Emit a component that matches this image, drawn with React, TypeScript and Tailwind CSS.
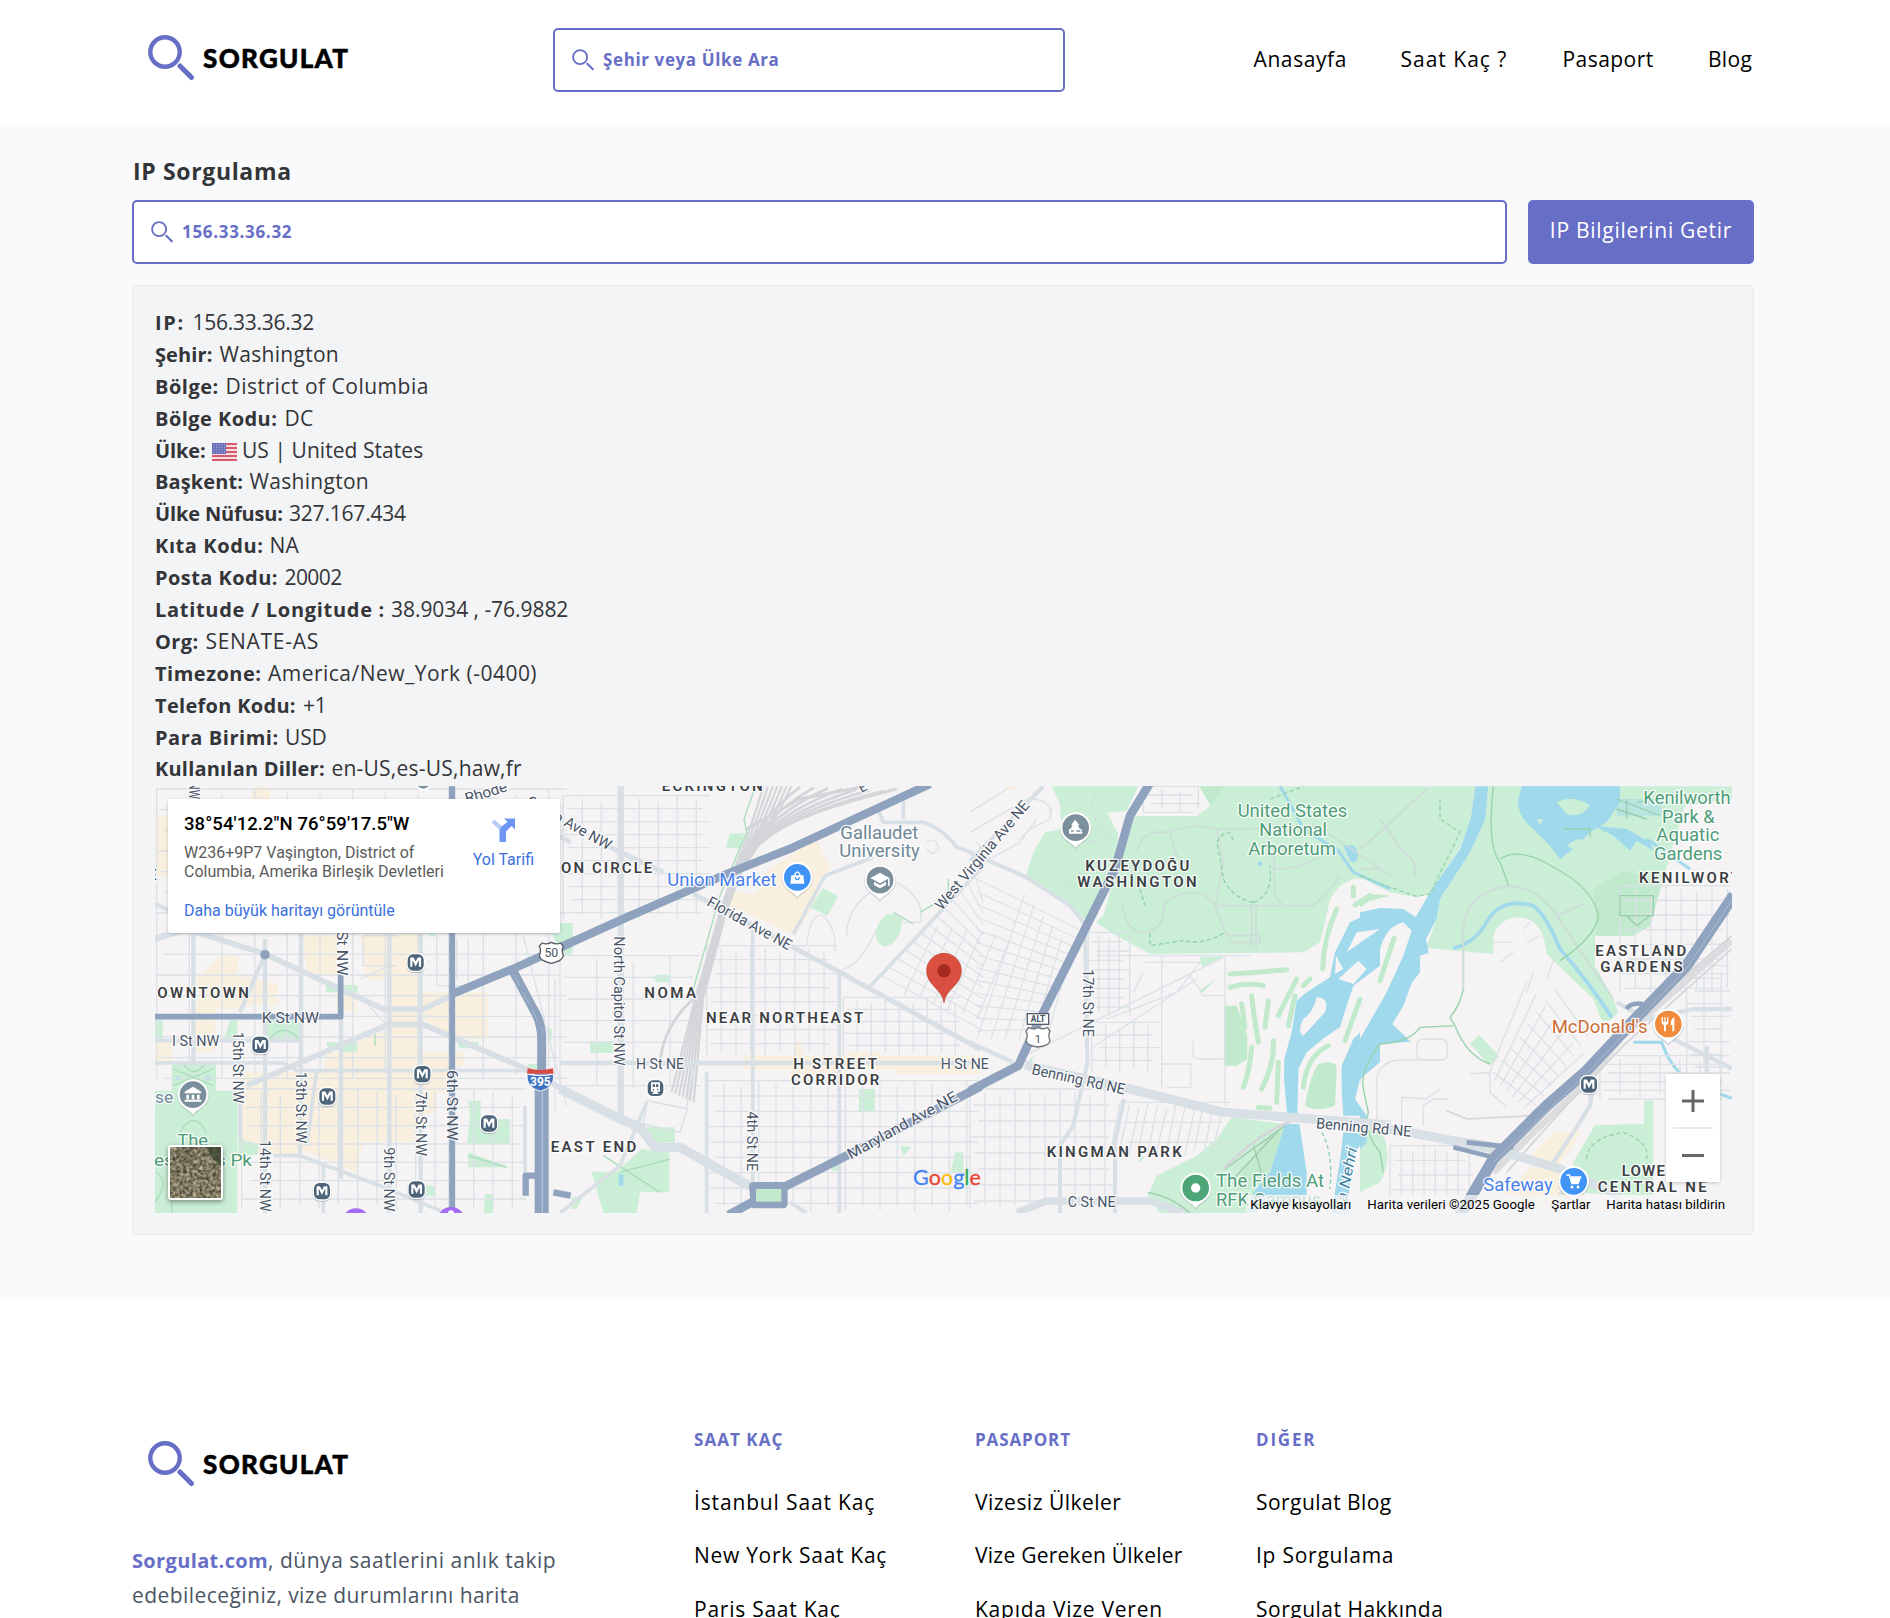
import type { ReactNode } from "react";

type Row = { label: string; value: string; lc: string; vc: string; flag?: boolean };

const rows: Row[] = [
  { label: "IP:", value: "156.33.36.32", lc: "w-[37.500px] tracking-[1.700px]", vc: "tracking-[-0.250px]" },
  { label: "Şehir:", value: "Washington", lc: "w-[64.500px] tracking-[0.1px]", vc: "tracking-[0.300px]" },
  { label: "Bölge:", value: "District of Columbia", lc: "w-[70.500px] tracking-[0.5px]", vc: "tracking-[0.500px]" },
  { label: "Bölge Kodu:", value: "DC", lc: "w-[129.500px] tracking-[0.45px]", vc: "tracking-[0.300px]" },
  { label: "Ülke:", value: "US | United States", lc: "w-[56.500px] tracking-[-0.1px]", vc: "tracking-[0.050px]", flag: true },
  { label: "Başkent:", value: "Washington", lc: "w-[94.500px] tracking-[0.1px]", vc: "tracking-[0.300px]" },
  { label: "Ülke Nüfusu:", value: "327.167.434", lc: "w-[134px] tracking-[-0.150px]", vc: "tracking-[-0.200px]" },
  { label: "Kıta Kodu:", value: "NA", lc: "w-[114.500px] tracking-[0.600px]", vc: "tracking-[0.2px]" },
  { label: "Posta Kodu:", value: "20002", lc: "w-[129.500px] tracking-[0.450px]", vc: "tracking-[-0.600px]" },
  { label: "Latitude / Longitude :", value: "38.9034 , -76.9882", lc: "w-[236px] tracking-[0.7px]", vc: "tracking-[-0.050px]" },
  { label: "Org:", value: "SENATE-AS", lc: "w-[50.500px] tracking-[0.4px]", vc: "tracking-[0.700px]" },
  { label: "Timezone:", value: "America/New_York (-0400)", lc: "w-[113px] tracking-[0.5px]", vc: "tracking-[0.480px]" },
  { label: "Telefon Kodu:", value: "+1", lc: "w-[148px] tracking-[0.3px]", vc: "tracking-[-0.2px]" },
  { label: "Para Birimi:", value: "USD", lc: "w-[130px] tracking-[0.550px]", vc: "tracking-[-0.100px]" },
  { label: "Kullanılan Diller:", value: "en-US,es-US,haw,fr", lc: "w-[176.500px] tracking-[0.2px]", vc: "tracking-[0.220px]" },
];

function SearchIcon({ className, w }: { className: string; w: number }) {
  return (
    <svg viewBox="0 0 46 46" className={className} fill="none" stroke="#676ec6">
      <circle cx="17" cy="17" r="14.7" strokeWidth={w} />
      <path d="M32 31 L43.500 42.500" strokeWidth={w * 1.15} strokeLinecap="round" />
    </svg>
  );
}

function Logo() {
  return (
    <div className="flex items-center pl-[16px]">
      <SearchIcon className="size-[46px]" w={4.4} />
      <span className="ml-[9px] -mt-[1px] font-['Lato'] text-[26px] leading-none font-black tracking-[1.3px] text-black [-webkit-text-stroke:0.5px]">SORGULAT</span>
    </div>
  );
}

function Flag() {
  return (
    <svg viewBox="0 0 25 18" className="mt-[8px] mr-[5.500px] h-[18px] w-[25px]">
      {Array.from({ length: 9 }, (_, i) => (
        <rect key={i} x="0" y={i * 2} width="25" height="2" fill={i % 2 ? "#f3dfe3" : "#d9596a"} />
      ))}
      <rect width="14" height="11" fill="#6a6fb8" />
      {Array.from({ length: 20 }, (_, i) => (
        <rect key={i} x={1.500 + (i % 5) * 2.600} y={1.200 + Math.floor(i / 5) * 2.500} width="1" height="1" fill="#b9bbe2" />
      ))}
    </svg>
  );
}

/* Map drawing: 3 units per CSS pixel. Sections are offset horizontally. */
const A = ({ children }: { children: ReactNode }) => <g transform="translate(-15 -21)">{children}</g>;
const B = ({ children }: { children: ReactNode }) => <g transform="translate(1215 -21)">{children}</g>;
const C = ({ children }: { children: ReactNode }) => <g transform="translate(2445 -21)">{children}</g>;
const D = ({ children }: { children: ReactNode }) => <g transform="translate(3615 -21)">{children}</g>;

type LabelProps = { x: number; y: number; w: number; r?: number; s?: number; c?: string; b?: boolean; i?: boolean; children: string };
function Label({ x, y, w, r = 0, s = 45, c = "#4a5568", b, i, children }: LabelProps) {
  return (
    <text
      transform={`translate(${x} ${y}) rotate(${r})`}
      fontSize={s}
      fontWeight={b ? 600 : 400}
      fontStyle={i ? "italic" : "normal"}
      fill={c}
      stroke="#ffffff"
      strokeOpacity="0.85"
      strokeWidth="8"
      strokeLinejoin="round"
      paintOrder="stroke"
      textLength={w}
      lengthAdjust={b ? "spacing" : "spacingAndGlyphs"}
    >
      {children}
    </text>
  );
}

function Metro({ x, y }: { x: number; y: number }) {
  return (
    <g transform={`translate(${x} ${y})`}>
      <rect x="-28" y="-27" width="56" height="58" rx="20" fill="#8d99a5" opacity="0.6" />
      <rect x="-28" y="-29" width="56" height="57" rx="20" fill="#fff" />
      <rect x="-24" y="-25" width="48" height="49" rx="16" fill="#4e6479" />
      <path d="M-13 12 V-12 H-8 L0 4 L8 -12 H13 V12" fill="none" stroke="#fff" strokeWidth="6.500" />
    </g>
  );
}

function Poi({ x, y, c, children }: { x: number; y: number; c: string; children?: ReactNode }) {
  return (
    <g transform={`translate(${x} ${y})`}>
      <path d="M0 65 C-12 47 -47 38 -47 3 A47 47 0 1 1 47 3 C47 38 12 47 0 65Z" fill="#9aa3ab" opacity="0.5" />
      <path d="M0 60 C-12 43 -46 35 -46 0 A46 46 0 1 1 46 0 C46 35 12 43 0 60Z" fill="#fff" />
      <circle r="40" fill={c} />
      <g fill="#fff">{children}</g>
    </g>
  );
}

function grid(x0: number, x1: number, y0: number, y1: number, sx: number, sy: number, skew = 0) {
  let d = "";
  let n = 0;
  for (let x = x0; x <= x1; x += sx, n++) d += `M${x} ${y0 + (n % 3) * 9}L${x + skew} ${y1 - (n % 2) * 14}`;
  n = 0;
  for (let y = y0; y <= y1; y += sy, n++) d += `M${x0 + (n % 3) * 12} ${y}L${x1 - (n % 2) * 22} ${y}`;
  return d;
}

function CityMap() {
  const dark = "#3c4043";
  return (
    <svg viewBox="0 0 4731 1281" className="block h-[427px] w-[1577px] bg-[#f5f3f4] font-['Roboto']">
      {/* commercial areas */}
      <g fill="#f8efdf">
        <A>
          <path d="M15 110H55V290H15ZM305 22H360V60H305ZM140 600L210 530L265 530L262 590L385 615V680H150ZM150 640H270V690H200L190 820H130V730ZM15 790H65V850H15ZM460 470H560V590H470ZM630 470H720V600H650ZM720 462H812V880H720ZM820 640H1015V780H900L820 720ZM270 880H520L530 820H620V790L720 750V1090H640L620 1180L450 1110L430 1130L270 1120ZM720 880H860V1000L800 1010V1090H720ZM820 820H940V860H900V940H820ZM560 640H620V700L560 690Z" />
        </A>
        <B>
          <path d="M620 275L770 180L812 270L790 290L755 390L705 470L500 375L512 340L590 345ZM550 830H700L705 788H725L730 830H860L870 820H960V830H1260V885H1010L1000 870H860L855 885H690V870H550Z" />
        </B>
        <C><path d="M0 830H28V860L0 885ZM105 22H150L110 35Z" /></C>
        <D><path d="M520 1120L585 1060H660L640 1100L590 1165L640 1200L700 1290H480L470 1245H430L520 1160Z" /></D>
      </g>

      {/* parks */}
      <g fill="#cbeed6">
        <A>
          <path d="M15 935H262V1302H15ZM65 855H198V935H65ZM15 722H38V780H15ZM222 780L240 722H262V780ZM350 722H448V780H350ZM528 618H622V640H528ZM530 790H622V818H575L530 800ZM955 965H992V1020H1080V1095H950L960 1020ZM955 1120L1078 1165H955ZM920 788H985V808H930ZM1195 435H1262V530L1230 520ZM1005 1245H1030V1302H1002ZM265 1080L330 1095L320 1128H265ZM838 462H855V472H838ZM790 1220H855V1250H800ZM1135 855H1165V870H1135ZM1195 750H1205V785H1195Z" />
        </A>
        <B>
          <path d="M510 163H553L540 210L497 205ZM0 432H38V522L0 515ZM790 328L835 352L802 410L750 385ZM1000 405L1028 420L1020 460Q1000 505 972 502Q942 490 948 455Q965 400 1000 405ZM90 787H160V822H90ZM280 598L290 587H328V610H290ZM897 930H945V998H897ZM95 1178H170L245 1110L328 1120V1240H240L230 1302H130ZM260 1045H345V1090H270ZM1185 1120H1210V1178H1172ZM1020 1100L1055 1105L1030 1130ZM35 1255L70 1250L50 1290H35ZM815 1160H835V1175H815Z" />
        </B>
        <C>
          <path d="M245 22H505L470 95L412 102L445 165L440 215L380 360L345 420L300 380L165 300L190 220L225 160L275 150L270 75ZM495 112H680L722 80L688 22H1262V300H1150L1110 320L1080 360L1060 450L1050 490L1000 520L540 525L430 465L378 430L400 410L445 250L475 125ZM690 535L765 532L695 565ZM785 1015L945 1035L900 1180L860 1302H570L533 1250L560 1190L680 1130L740 1080ZM175 845L190 830L185 850ZM505 1135L525 1130L510 1152Z" />
        </C>
        <D>
          <path d="M0 22H346L330 130L300 205L208 345L170 355L90 340L0 295ZM382 22H1115V60L975 80L955 150L935 210L905 320L870 440L820 470H705V560L760 660L775 700L750 725H725L700 660L560 525Q550 420 480 415Q420 415 400 470V525L198 507L230 420L240 360L330 220L375 120ZM330 795L358 768L418 832L390 860ZM0 1000L75 1080Q95 1150 60 1210L0 1240ZM640 1150L705 1038L852 1035V965H880V1247H780L640 1240Z" />
        </D>
      </g>
      <g fill="#c0eacb">
        <C>
          <path d="M688 22H765L722 80ZM762 680H800L832 770V840L800 860H762ZM690 635L740 598L695 642ZM1045 855Q1100 840 1100 870L1095 980Q1040 1000 1005 980Q1020 890 1045 855ZM860 1110L945 1035L900 1180L830 1230H790Z" />
          <g fill="none" stroke="#c0eacb" strokeWidth="15" strokeLinecap="round">
            <path d="M780 585Q860 580 950 572M780 625Q830 610 880 620M845 650Q850 700 865 790M815 675L825 745M895 665L885 745M980 600L925 710M975 650L955 740M910 785Q915 850 875 930M845 805Q840 870 820 925M925 850L920 970M1075 800Q1010 830 1000 925M1170 660L1125 785M1100 390Q1060 480 1058 570M1150 325V350M1155 378L1200 350M1000 620L1020 600M865 985L900 988" />
          </g>
        </C>
        <D><path d="M700 330L790 275L905 310L870 440L820 470H708V400ZM0 360Q30 340 90 350L30 365L0 385Z" /></D>
      </g>

      {/* water */}
      <g fill="#a0d8ec">
        <D>
          <path d="M346 22H384L376 120L330 220L240 360L230 420L198 480L206 522L180 530V580L155 612L130 680L97 735L152 788L60 795L15 860L0 910V690L60 600L60 520L0 590V400L60 387L130 390L167 415L210 340L300 210L332 120Z" />
          <path d="M485 22H780V70L740 130L690 160L640 210L600 240L570 200L520 150Q470 110 475 60Z" />
          <path d="M770 60H905V110H770Z" opacity="0.45" />
          <path d="M700 140L800 150L870 190L880 215L830 185L810 215L760 170Z" />
          <path d="M0 985L20 1010L20 1090L0 1110Z" />
        </D>
        <C>
          <path d="M1230 390L1140 430L1095 520L1080 595L1010 640L980 665L965 760L943 840L942 900L952 1010H982L985 870L1010 820L1065 775L1110 745L1130 680L1150 620L1230 560ZM1230 700L1150 780L1115 860V930L1120 1010L1190 1010L1155 960L1170 900L1230 850ZM945 1035H988L1010 1180V1250L830 1302L850 1240L900 1180ZM1120 1060L1190 1065L1150 1130L1130 1302H1085L1112 1130ZM1120 200Q1160 190 1165 225Q1160 260 1140 245Z" />
          <path d="M930 22L960 75L1000 150L1105 215L1150 280L1262 330" fill="none" stroke="#a0d8ec" strokeWidth="9" />
          <circle cx="870" cy="254" r="7" />
        </C>
        <D>
          <path d="M280 508Q350 490 385 420Q430 355 520 380Q560 410 600 510Q680 600 755 715" fill="none" stroke="#a0d8ec" strokeWidth="11" />
          <path d="M820 790H905Q930 860 965 885M1080 945L1115 958M860 180L990 270" fill="none" stroke="#a0d8ec" strokeWidth="9" />
        </D>
        <A><path d="M76 890h14v14h-14zM165 890h14v14h-14z" opacity="0.6" /></A>
        <B><path d="M176 1185H190V1220H176Z" /></B>
      </g>
      <g fill="#f5f3f4">
        <D><path d="M60 510Q80 440 130 430L155 455L130 530L80 640L0 780V690L60 600Z" /><path d="M590 70Q640 45 690 80Q660 120 620 105ZM620 200L650 180L700 190L680 230ZM530 120H550L540 138Z" fill="#cbeed6" /></D>
        <C><path d="M1040 655Q1080 655 1065 700L1000 770Q980 760 1000 720Q1030 700 1040 655ZM1098 530L1120 570L1095 585ZM1165 545L1190 570L1150 615L1105 600ZM1230 450L1130 520L1160 460Z" /></C>
        <D><path d="M102 478L60 605" stroke="#c0eacb" strokeWidth="15" strokeLinecap="round" /></D>
      </g>

      {/* minor streets */}
      <g fill="none" stroke="#dbe2e7" strokeWidth="4">
        <A>
          <path d={grid(20, 1250, 30, 900, 98, 62)} />
          <path d={grid(275, 1130, 930, 1290, 58, 55)} />
          <path d="M740 470H640V560H740M860 470V620H1000M920 480V600M955 480V610M1120 470L1215 850L1250 980M1215 600V1000M1000 660V860M630 600L720 560M640 660L710 740M15 480L100 462" />
        </A>
        <B>
          <path d={grid(10, 450, 50, 420, 57, 39)} />
          <path d={grid(0, 420, 530, 930, 110, 65)} />
          <path d={grid(440, 830, 500, 830, 44, 42)} />
          <path d={grid(850, 1200, 655, 830, 42, 36)} />
          <path d={grid(440, 1255, 905, 1295, 52, 46)} />
          <path d="M740 500Q750 400 790 410Q830 450 825 520M850 570Q900 560 950 450M860 470Q860 390 930 340M1010 310Q1100 360 1080 430L1030 430M1100 190Q1130 170 1135 210Q1120 235 1100 210" />
          {Array.from({ length: 13 }, (_, i) => (
            <path key={i} strokeWidth="3.500" d={`M${965 + i * 23} ${590 - i * 26}L${1270} ${755 - i * 32}${i % 2 ? `M${1010 + i * 22} ${640 + i * 7}L${1110 + i * 22} ${440 + i * 3}` : ""}`} />
          ))}
        </B>
        <C>
          {Array.from({ length: 13 }, (_, i) => (
            <path key={i} strokeWidth="3.500" d={`M${20} ${300 + i * 38}L${325 - i * 10} ${450 + i * 25}${i % 2 ? `M${i * 21} ${780}L${150 + i * 14} ${330 + i * 16}` : ""}`} />
          ))}
          <path d={grid(355, 480, 460, 710, 31, 28)} />
          <path d={grid(365, 570, 730, 880, 42, 38)} />
          <path d={grid(0, 440, 930, 1290, 45, 48)} />
          <path d={grid(450, 780, 970, 1130, 28, 60, -30)} />
          <path d="M380 530H840M575 530V930M765 535V980M165 830L760 535M360 810L680 600M520 580L490 640M525 550H690L620 640L410 720M660 590L700 650H765M670 785V830Q670 840 690 840H760M575 855H662V925H590M0 100L110 30M0 160L190 50M20 190L60 240L150 190L200 120M245 85L240 120" />
          <path d={grid(520, 690, 22, 100, 55, 26)} />
          <path d="M180 60Q250 60 240 120L180 150L150 180" />
          <path d="M250 200Q320 220 330 300M200 230Q260 300 330 340M380 30Q340 120 430 180M290 170Q330 200 400 180" stroke="#cfe3dc" />
          <path d="M500 215Q520 150 590 160Q680 130 740 150L830 150M600 160L620 230L660 260M455 370Q470 470 530 460Q590 440 580 380Q620 330 700 345L740 380M740 380H1030Q1090 330 1110 290M740 150L760 250L735 380L770 470H870V490H770M845 380V510M858 380V510M910 200L915 350L940 380M1262 290L1040 140L830 150M915 270Q1000 270 1050 230" stroke="#cdddda" strokeWidth="5" />
        </C>
        <D>
          <path d={grid(780, 1110, 320, 640, 46, 44)} />
          <path d={grid(720, 1110, 830, 960, 60, 26)} />
          <path d={grid(90, 340, 1100, 1290, 34, 44)} />
          <path d={grid(980, 1110, 560, 880, 52, 38)} />
          {Array.from({ length: 8 }, (_, i) => (
            <path key={i} d={`M${500 + i * 28} ${610 + i * 36}L${385 + i * 18} ${890 + i * 16}M${400 + i * 26} ${880 - i * 36}L${530 + i * 22} ${980 - i * 30}`} />
          ))}
          <path d="M170 800Q170 780 190 780H240Q262 780 262 800V830Q262 842 240 842H190Q170 842 170 825ZM50 1040V900Q60 845 120 843H250M125 1040V955L200 960L240 930M190 1040V980L220 960H265M330 885L390 880V940L440 985M400 490H460M420 550L460 520M490 450L510 430M500 640L520 580M540 470L500 490M560 600L590 520" />
          <path d="M310 630V460Q310 340 450 320Q540 330 590 410L760 660M590 410L670 375M60 120L130 220Q170 240 165 290M0 210L60 160L200 30M0 270H60" stroke="#cdddda" strokeWidth="6" />
        </D>
      </g>

      {/* trails */}
      <g fill="none" stroke="#a9dcb9" strokeWidth="4">
        <A><path d="M65 1302V1210Q120 1190 130 1090M90 1060Q130 990 170 1060M20 1180Q60 1210 15 1270M70 870L190 920M190 870L70 920M100 855Q130 900 165 855M360 778Q400 730 445 778M955 1130L1070 1165M630 60L650 80M675 800V765" /></A>
        <B><path d="M580 40L552 120L560 160L480 350L400 630M130 1130L300 1240M180 1180L330 1140M1165 300V350L1080 400M1000 400L1060 435" /></B>
        <C>
          <path d="M540 462V500Q600 490 640 485Q700 500 765 460M850 370Q790 360 760 300Q750 230 740 190Q780 130 790 190M850 370Q910 350 900 260M510 330L525 380M1055 1060Q1090 1120 1080 1230M900 60L1000 22" strokeDasharray="13 8" stroke="#8fcfae" />
          <path d="M765 1170L945 1040M790 1200L930 1050M850 1100L880 1200M533 1240Q600 1250 660 1302" stroke="#9fc9ac" />
        </C>
        <D>
          <path d="M400 22Q380 200 420 250Q440 300 445 320M310 630Q300 680 270 715L285 740L180 745Q150 790 60 795Q0 870 10 930L25 1000Q10 1060 60 1120L70 1180M285 740Q320 830 390 855M420 240Q480 200 590 270Q700 330 715 410Q710 470 600 545" stroke="#97d3aa" />
          <path d="M0 290Q100 330 170 352L210 345L300 160L240 120V60M680 1140Q680 1080 790 1060Q870 1090 860 1140" strokeDasharray="13 8" stroke="#97d3aa" />
          <path d="M780 350H880V410H780ZM800 410L830 440L870 410M610 150H690V175M770 60L900 110M770 90L860 120M800 60V120M830 70L900 60" stroke="#97cfae" />
        </D>
      </g>

      {/* railways */}
      <g fill="none" stroke="#d3d5d9" strokeWidth="5">
        <B>
          {Array.from({ length: 7 }, (_, i) => (
            <path key={i} strokeWidth="6.500" d={`M${610 + i * 14} 22Q${570 + i * 10} 160 ${525 + i * 4} 265L${480 + i * 3} 400L${405 + i * 4} 660L${335 + i * 11} ${940 + i * 5}`} />
          ))}
          {Array.from({ length: 7 }, (_, i) => (
            <path key={`r${i}`} strokeWidth="8" d={`M540 270Q${590 + i * 4} 120 ${720 + i * 42} ${24 + i * 2}`} />
          ))}
          <path d="M400 660Q310 740 300 850M580 200Q680 110 1010 30M560 150L720 60L900 25" strokeWidth="9" />
          <path d="M262 965L382 990L360 1060L250 1035ZM380 985L400 870" stroke="#dbe2e7" />
        </B>
        <C><path d="M760 1170Q900 1030 1010 1015" strokeWidth="8" /></C>
        <D>
          <path d="M1115 485L780 780L690 900L520 1060L400 1180" strokeWidth="20" stroke="#dcdcdf" />
          <path d="M1115 470L780 760M1115 510L790 800L600 1000L440 1180M150 1055L450 1100M260 995L320 1020L520 1010" />
        </D>
      </g>

      {/* main streets */}
      <g fill="none" stroke="#d8dfe5" strokeLinejoin="round">
        <A>
          <path d="M130 462V850M345 480V1302M453 462V900L450 1130M573 700V1200M718 462V1302M812 462V1302M15 375L60 395M270 700L345 525" strokeWidth="13" />
          <path d="M15 480L110 450L345 525L700 690H820L905 650M290 920L715 737H820L1130 870L1262 945" strokeWidth="17" />
          <path d="M15 852H400L440 875H1130M270 1085V935M15 785H450M370 1130H450L690 1220L870 1295M520 1150V1302M500 877L470 1100M1125 980V1190" strokeWidth="11" />
          <path d="M980 40L1262 190" strokeWidth="14" />
        </A>
        <B>
          <path d="M182 22V1010" strokeWidth="19" />
          <path d="M0 930L180 1020L240 1045L285 1105H360L570 1222" strokeWidth="28" />
          <path d="M0 852H1262" strokeWidth="13" />
          <path d="M150 205L310 280M400 345L840 580L1262 812" strokeWidth="15" />
          <path d="M578 450V1220M838 580V1302M440 880V1302M928 625L1262 270M700 465L795 290L940 235M950 80L970 130H1090Q1150 150 1190 205L1262 230M1030 60V120M690 1270L740 1302M0 1302L180 1160L260 970" strokeWidth="11" />
        </B>
        <C>
          <path d="M0 220L170 295L300 380L345 435L352 850L310 1040L270 1100V1302M462 960L435 1090V1302M220 22L0 245M0 790L130 850" strokeWidth="12" />
          <path d="M165 858L480 930L760 1000L1262 1038" strokeWidth="27" />
          <path d="M140 1302L230 1266H540L640 1302" strokeWidth="22" />
        </C>
        <D>
          <path d="M0 1035L160 1062L410 1112L600 1170L780 1250" strokeWidth="27" />
          <path d="M700 900L690 980L640 1060L580 1150M770 670L860 720L1000 690H1115M940 780L1115 868M1040 800V885M640 1180L600 1250" strokeWidth="13" />
        </D>
      </g>

      {/* highways */}
      <g fill="none" stroke="#8fa3bf" strokeLinejoin="round">
        <A>
          <path d="M906 22V1302M1210 1240L1262 1250M1127 1250V1190H1160" strokeWidth="19" />
          <path d="M15 713H572V585" strokeWidth="17" />
          <path d="M906 645L1088 570L1262 492" strokeWidth="25" />
          <path d="M1086 570L1150 690Q1175 730 1175 780V900" strokeWidth="27" />
          <path d="M1175 880V1302" strokeWidth="42" />
          <path d="M1177 940V1302" strokeWidth="4" stroke="#b4c2d5" />
          <circle cx="345" cy="527" r="14" fill="#8fa3bf" />
          <path d="M898 462V1302M1092 586L1180 760" strokeWidth="2" stroke="#b9c7d8" strokeDasharray="40 20" />
        </A>
        <B>
          <path d="M0 505L200 415L500 285L700 205L1110 15" strokeWidth="25" />
          <path d="M0 1245L30 1250" strokeWidth="16" />
          <path d="M505 1308L585 1265M580 1222H670V1275H585ZM670 1225L860 1130L1262 922" strokeWidth="26" />
          <path d="M588 1230H664V1268H588Z" fill="#c0eacb" strokeWidth="0" />
        </B>
        <C><path d="M0 935L145 860L200 740L345 450L435 270L480 110L538 15" strokeWidth="26" /></C>
        <D>
          <path d="M1122 348L1060 440L980 560L830 715L680 875L560 980L400 1140L300 1310" strokeWidth="34" />
          <path d="M800 690Q810 670 850 675M460 1105L320 1090M400 1135L280 1105" strokeWidth="14" />
          <path d="M1115 365L980 568L680 884L400 1150" strokeWidth="3" stroke="#a9b8cd" />
        </D>
      </g>

      {/* labels */}
      <A>
        <Label x={118} y={10} w={50} r={90}>NW</Label>
        <Label x={950} y={74} w={130} r={-17}>Rhode</Label>
        <Label x={1130} y={62} w={26} r={50}>e</Label>
        <Label x={22} y={658} w={275} b c={dark}>OWNTOWN</Label>
        <Label x={335} y={732} w={172}>K St NW</Label>
        <Label x={66} y={802} w={142} s={43}>I St NW</Label>
        <Label x={250} y={758} w={215} r={90} s={43}>15th St NW</Label>
        <Label x={437} y={878} w={215} r={90} s={43}>13th St NW</Label>
        <Label x={560} y={455} w={135} r={90}>St NW</Label>
        <Label x={330} y={1083} w={215} r={90} s={43}>14th St NW</Label>
        <Label x={702} y={1105} w={193} r={90} s={43}>9th St NW</Label>
        <Label x={798} y={938} w={193} r={90} s={43}>7th St NW</Label>
        <Label x={890} y={873} w={212} r={90}>6th St NW</Label>
        <Label x={-6} y={303} w={34} b c={dark}>E</Label>
        <Label x={15} y={973} w={55} s={52} c="#72879a">se</Label>
        <Label x={82} y={1100} w={92} s={52} c="#4f9c78">The</Label>
        <Label x={12} y={1160} w={294} s={52} c="#4f9c78">esidents Pk</Label>
        <Label x={1233} y={283} w={274} b c={dark}>ON CIRCLE</Label>
        <Label x={1202} y={1118} w={257} b c={dark}>EAST END</Label>
        <Metro x={797} y={551} /><Metro x={331} y={798} /><Metro x={532} y={953} /><Metro x={817} y={886} />
        <Metro x={1017} y={1034} /><Metro x={516} y={1237} /><Metro x={800} y={1232} />
        <circle cx="820" cy="12" r="24" fill="#fff" /><circle cx="820" cy="8" r="21" fill="#7b8fa0" />
        <circle cx="618" cy="1330" r="42" fill="#a56cf3" /><circle cx="903" cy="1326" r="42" fill="#a56cf3" />
        <circle cx="903" cy="1303" r="9" fill="#fff" />
        <Poi x={129} y={947} c="#7b909c">
          <path d="M-25 -9L0 -24L25 -9V-4H-25ZM-20 0H-12V14H-20ZM-4 0H4V14H-4ZM12 0H20V14H12ZM-25 15H25V21H-25Z" />
        </Poi>
        <path d="M1176 492Q1190 498 1204 490Q1218 498 1232 492L1240 502Q1233 512 1240 530Q1238 546 1204 553Q1170 546 1168 530Q1175 512 1168 502Z" fill="#fff" stroke="#555d66" strokeWidth="4" />
        <text x="1204" y="535" fontSize="37" textAnchor="middle" fill="#4b5563">50</text>
        <path d="M1131 885Q1171 895 1211 885Q1215 925 1171 937Q1127 925 1131 885Z" fill="#3f73c4" stroke="#fff" strokeWidth="3" />
        <path d="M1133 868Q1171 878 1209 868L1211 884H1131Z" fill="#d84b45" />
        <text x="1171" y="920" fontSize="36" fontWeight="700" textAnchor="middle" fill="#fff">395</text>
      </A>
      <B>
        <Label x={-22} y={122} w={190} r={29}>a Ave NW</Label>
        <Label x={305} y={36} w={303} b c={dark}>ECKINGTON</Label>
        <Label x={905} y={42} w={22} r={-30} s={40}>E</Label>
        <Label x={322} y={322} w={328} s={53} c="#4a80ea">Union Market</Label>
        <Label x={841} y={179} w={234} s={53} c="#6f8797">Gallaudet</Label>
        <Label x={838} y={235} w={241} s={53} c="#6f8797">University</Label>
        <Label x={438} y={378} w={282} r={29}>Florida Ave NE</Label>
        <Label x={1146} y={396} w={412} r={-50}>West Virginia Ave NE</Label>
        <Label x={162} y={472} w={388} r={90}>North Capitol St NW</Label>
        <Label x={253} y={658} w={155} b c={dark}>NOMA</Label>
        <Label x={438} y={731} w={472} b c={dark}>NEAR NORTHEAST</Label>
        <Label x={228} y={871} w={144}>H St NE</Label>
        <Label x={1142} y={869} w={144}>H St NE</Label>
        <Label x={700} y={871} w={251} b c={dark}>H STREET</Label>
        <Label x={693} y={919} w={265} b c={dark}>CORRIDOR</Label>
        <Label x={562} y={997} w={180} r={90}>4th St NE</Label>
        <Label x={872} y={1142} w={370} r={-29}>Maryland Ave NE</Label>
        <Poi x={712} y={295} c="#4193f5">
          <path d="M-18 -6H18L21 19H-21ZM-9 -6V-11Q0 -26 9 -11V-6H5V-10Q0 -18 -5 -10V-6Z" /><path d="M-7 0Q0 14 7 0" fill="none" stroke="#4193f5" strokeWidth="4" />
        </Poi>
        <Poi x={960} y={303} c="#7b909c">
          <path d="M0 -22L29 -6L0 10L-29 -6ZM-18 5L0 15L18 5V15L0 25L-18 15ZM24 -4H29V17H24Z" />
        </Poi>
        <rect x="259" y="900" width="55" height="55" rx="20" fill="#fff" /><rect x="263" y="904" width="47" height="47" rx="16" fill="#4e6479" />
        <path d="M273 910H300V938H273ZM276 945L282 938H291L297 945Z" fill="#fff" /><path d="M278 916H285V924H278ZM288 916H295V924H288ZM278 930H282V934H278ZM291 930H295V934H291Z" fill="#4e6479" />
        <path d="M1152 671C1148 630 1100 620 1100 575A52 52 0 1 1 1204 575C1204 620 1156 630 1152 671Z" fill="#db4f40" stroke="#b83a2e" strokeWidth="2" />
        <circle cx="1152" cy="575" r="20" fill="#a52a20" />
      </B>
      <C>
        <Label x={346} y={275} w={312} b c={dark}>KUZEYDOĞU</Label>
        <Label x={322} y={323} w={358} b c={dark}>WASHİNGTON</Label>
        <Label x={803} y={115} w={329} s={53} c="#4f9c78">United States</Label>
        <Label x={868} y={171} w={203} s={53} c="#4f9c78">National</Label>
        <Label x={835} y={227} w={263} s={53} c="#4f9c78">Arboretum</Label>
        <Label x={338} y={570} w={204} r={90}>17th St NE</Label>
        <Label x={183} y={885} w={285} r={12.5}>Benning Rd NE</Label>
        <Label x={230} y={1134} w={405} b c={dark}>KINGMAN PARK</Label>
        <Label x={293} y={1284} w={144}>C St NE</Label>
        <Label x={1037} y={1048} w={287} r={5}>Benning Rd NE</Label>
        <Label x={1124} y={1300} w={195} r={-79} c="#3f83a0" i>tia Nehri</Label>
        <Label x={738} y={1225} w={324} s={53} c="#4f9c78">The Fields At</Label>
        <Label x={738} y={1281} w={316} s={53} c="#4f9c78">RFK Campus</Label>
        <Poi x={317} y={146} c="#7b909c"><path d="M-2 -24L12 -7H6L15 8H2V12H20V18H-20V12H-6V8H-18L-9 -7H-14ZM-20 4H-14V14H-20ZM14 4H18V14H14Z" /></Poi>
        <Poi x={677} y={1227} c="#4da677"><circle r="14" /></Poi>
        <rect x="172" y="704" width="64" height="32" fill="#fff" stroke="#555d66" strokeWidth="4" />
        <text x="204" y="730" fontSize="25" fontWeight="700" textAnchor="middle" fill="#444c55">ALT</text>
        <path d="M175 746Q190 753 204 745Q218 753 233 746L240 757Q233 768 240 785Q238 800 204 804Q170 800 168 785Q175 768 168 757Z" fill="#fff" stroke="#6b727a" strokeWidth="4" />
        <text x="204" y="791" fontSize="34" textAnchor="middle" fill="#4b5563">1</text>
      </C>
      <D>
        <Label x={850} y={74} w={262} s={53} c="#4f9c78">Kenilworth</Label>
        <Label x={906} y={131} w={158} s={53} c="#4f9c78">Park &amp;</Label>
        <Label x={889} y={187} w={189} s={53} c="#4f9c78">Aquatic</Label>
        <Label x={882} y={243} w={205} s={53} c="#4f9c78">Gardens</Label>
        <Label x={837} y={312} w={342} b c={dark}>KENILWORTH</Label>
        <Label x={706} y={532} w={273} b c={dark}>EASTLAND</Label>
        <Label x={721} y={580} w={247} b c={dark}>GARDENS</Label>
        <Label x={575} y={763} w={288} s={53} c="#cd6d35">McDonald's</Label>
        <Label x={370} y={1235} w={208} s={53} c="#4a80ea">Safeway</Label>
        <Label x={785} y={1190} w={162} b c={dark}>LOWER</Label>
        <Label x={713} y={1239} w={327} b c={dark}>CENTRAL NE</Label>
        <Metro x={687} y={917} />
        <Poi x={925} y={735} c="#f08a3c"><path d="M-20 -20V-5Q-20 3 -13 4V22H-7V4Q0 3 0 -5V-20H-4V-6H-8V-20H-12V-6H-16V-20ZM18 -21Q7 -15 7 3H12V22H18Z" /></Poi>
        <Poi x={641} y={1207} c="#4193f5">
          <path d="M-22 -19H-13L-5 6H13L20 -13H-8" fill="none" stroke="#fff" strokeWidth="5" /><path d="M-9 -12H20L13 6H-4Z" /><circle cx="-5" cy="17" r="4.500" /><circle cx="13" cy="17" r="4.500" />
        </Poi>
      </D>
    </svg>
  );
}

function MapFrame() {
  return (
    <div className="relative mt-[1px] h-[427px] w-[1577px] overflow-hidden font-['Roboto']">
      <CityMap />
      <div className="absolute top-[13px] left-[13px] flex h-[134px] w-[392px] justify-between rounded-[2px] bg-white pt-[15px] pr-[26px] pl-[16px] shadow-[0_1px_4px_-1px_rgba(0,0,0,0.3)]">
        <div>
          <div className="text-[18.500px] leading-[21px] font-medium tracking-[0.070px] whitespace-nowrap text-black">38°54'12.2"N 76°59'17.5"W</div>
          <div className="mt-[8px] w-[270px] text-[16px] leading-[19px] whitespace-nowrap text-[#5b5b5b]">
            W236+9P7 Vaşington, District of
            <br />
            Columbia, Amerika Birleşik Devletleri
          </div>
          <div className="mt-[20px] text-[16px] leading-[19px] text-[#3a70dd]">Daha büyük haritayı görüntüle</div>
        </div>
        <div className="flex flex-col items-center pt-[4px]">
          <svg viewBox="0 0 24 24" className="size-6">
            <path d="M0.500 4.500L3.500 1.500L11 8.500L8.500 12Z" fill="#b9ccf8" />
            <path d="M13 0.500H24V11.500L20.500 8L15 13.500V24H8.500V13Q8.500 10.500 10.500 8.500L16.500 4Z" fill="#6f96f5" />
          </svg>
          <div className="mt-[8px] text-[16px] leading-[19px] whitespace-nowrap text-[#3a70dd]">Yol Tarifi</div>
        </div>
      </div>
      <div className="absolute top-[359px] left-[13px] size-[55px] overflow-hidden rounded-[3px] border-2 border-white bg-[#857d68] shadow-[0_2px_5px_rgba(0,0,0,0.4)]">
        <svg viewBox="0 0 51 51" className="size-full">
          <filter id="terrain" x="0" y="0" width="1" height="1" colorInterpolationFilters="sRGB">
            <feTurbulence type="fractalNoise" baseFrequency="0.3" numOctaves="4" seed="8" />
            <feColorMatrix values="0.8 0 0 0 0.1  0.77 0 0 0 0.09  0.66 0 0 0 0.06  0 0 0 0 1" />
          </filter>
          <rect width="51" height="51" filter="url(#terrain)" />
          <path d="M37 0H51V19L45 14L40 8Z" fill="#37442f" opacity="0.75" />
          <path d="M4 4L22 1L30 11L12 17Z" fill="#4b4936" opacity="0.25" />
        </svg>
      </div>
      <div className="absolute top-[381px] left-[758px] flex font-['Lato'] text-[21.500px] leading-none [-webkit-text-stroke:0.3px]">
        <span className="text-[#4285f4]">G</span>
        <span className="text-[#ea4335]">o</span>
        <span className="text-[#fbbc05]">o</span>
        <span className="text-[#4285f4]">g</span>
        <span className="text-[#34a853]">l</span>
        <span className="text-[#ea4335]">e</span>
      </div>
      <div className="absolute top-[288px] left-[1511px] flex h-[108px] w-[54px] flex-col items-center bg-white shadow-[0_1px_4px_-1px_rgba(0,0,0,0.3)]">
        <svg viewBox="0 0 54 108" className="h-[108px] w-[54px]">
          <path d="M16 27H38M27 16V38M16 81.500H38" stroke="#666" strokeWidth="3" />
          <path d="M7 54H47" stroke="#e3e3e3" strokeWidth="1.500" />
        </svg>
      </div>
      <div className="absolute right-0 bottom-0 flex h-[18px] items-center bg-[#f5f5f5]/75 pt-[1px] pr-[7px] pl-[4px] text-[13.300px] leading-[18px] whitespace-nowrap text-black">
        <span className="w-[117px]">Klavye kısayolları</span>
        <span className="w-[184px]">Harita verileri ©2025 Google</span>
        <span className="w-[55px]">Şartlar</span>
        <span>Harita hatası bildirin</span>
      </div>
    </div>
  );
}

const columns = [
  {
    title: "SAAT KAÇ",
    tc: "tracking-[1.050px]",
    links: [
      ["İstanbul Saat Kaç", "tracking-[0.850px]"],
      ["New York Saat Kaç", "tracking-[0.700px]"],
      ["Paris Saat Kaç", "tracking-[0.750px]"],
    ],
  },
  {
    title: "PASAPORT",
    tc: "tracking-[0.900px]",
    links: [
      ["Vizesiz Ülkeler", "tracking-[0.480px]"],
      ["Vize Gereken Ülkeler", "tracking-[0.250px]"],
      ["Kapıda Vize Veren", "tracking-[0.750px]"],
    ],
  },
  {
    title: "DIĞER",
    tc: "tracking-[1.800px]",
    links: [
      ["Sorgulat Blog", "tracking-[0.450px]"],
      ["Ip Sorgulama", "tracking-[0.750px]"],
      ["Sorgulat Hakkında", "tracking-[0.500px]"],
    ],
  },
];

export default function App() {
  return (
    <div className="h-[1618px] overflow-hidden bg-white font-['Open_Sans',sans-serif] text-[20px]">
      <header className="flex h-[125px] justify-between bg-white pr-[136px] pl-[132px]">
        <div className="flex w-[421px] pt-[35px]">
          <div>
            <Logo />
          </div>
        </div>
        <div className="mt-[28px] flex h-[64px] w-[512px] items-center rounded-[5px] border-2 border-[#676ec6] bg-white pl-[17px]">
          <SearchIcon className="size-[22px]" w={3.9} />
          <span className="ml-[9px] text-[17px] font-bold tracking-[0.62px] text-[#676ec6]">Şehir veya Ülke Ara</span>
        </div>
        <nav className="flex flex-1 justify-end pt-[44px] text-[21px] leading-[31px] whitespace-nowrap text-black">
          <span className="w-[147px] tracking-[0.600px]">Anasayfa</span>
          <span className="w-[162px] tracking-[1px]">Saat Kaç ?</span>
          <span className="w-[145.500px] tracking-[0.450px]">Pasaport</span>
          <span className="w-[46px] tracking-[0.300px]">Blog</span>
        </nav>
      </header>

      <main className="h-[1175px] bg-[#f9fafc] pr-[136px] pl-[132px] text-[#333538]">
        <h1 className="pt-[30px] pl-[1px] text-[23px] leading-[32px] font-bold tracking-[0.650px]">IP Sorgulama</h1>
        <div className="mt-[13px] flex justify-between">
          <div className="flex h-[64px] w-[1375px] items-center rounded-[5px] border-2 border-[#676ec6] bg-white pl-[17px]">
            <SearchIcon className="size-[22px]" w={3.9} />
            <span className="ml-[9px] text-[17px] font-bold tracking-[0.680px] text-[#676ec6]">156.33.36.32</span>
          </div>
          <button className="h-[64px] w-[226px] rounded-[5px] bg-[#676ec6] pb-[2px] text-[21px] whitespace-nowrap text-white tracking-[0.720px]">IP Bilgilerini Getir</button>
        </div>
        <section className="mt-[21px] h-[950px] rounded-[5px] border border-[#e5e7ea] bg-[#f3f4f6] pt-[21px] pl-[22px]">
          {rows.map((r) => (
            <p key={r.label} className="flex h-[31.900px] leading-[31.900px] whitespace-nowrap">
              <strong className={`block font-bold ${r.lc}`}>{r.label}</strong>
              {r.flag && <Flag />}
              <span className={`text-[21px] ${r.vc}`}>{r.value}</span>
            </p>
          ))}
          <MapFrame />
        </section>
      </main>

      <footer className="flex bg-white pl-[132px]">
        <div className="w-[562px] pt-[141px]">
          <Logo />
          <p className="mt-[56px] leading-[34px] whitespace-nowrap text-[#4b5563]">
            <b className="font-bold tracking-[0.350px] text-[#676ec6]">Sorgulat.com</b>
            <span className="text-[21px] tracking-[0.520px]">, dünya saatlerini anlık takip</span>
            <br />
            <span className="text-[21px] tracking-[0.440px]">edebileceğiniz, vize durumlarını harita</span>
          </p>
        </div>
        {columns.map((c) => (
          <div key={c.title} className="w-[281px] pt-[127px] whitespace-nowrap text-black">
            <h2 className={`text-[17px] leading-[26px] font-bold text-[#676ec6] ${c.tc}`}>{c.title}</h2>
            <ul className="mt-[33px] flex flex-col gap-[21.300px]">
              {c.links.map(([t, k]) => (
                <li key={t} className={`text-[21px] leading-[32px] ${k}`}>{t}</li>
              ))}
            </ul>
          </div>
        ))}
      </footer>
    </div>
  );
}
